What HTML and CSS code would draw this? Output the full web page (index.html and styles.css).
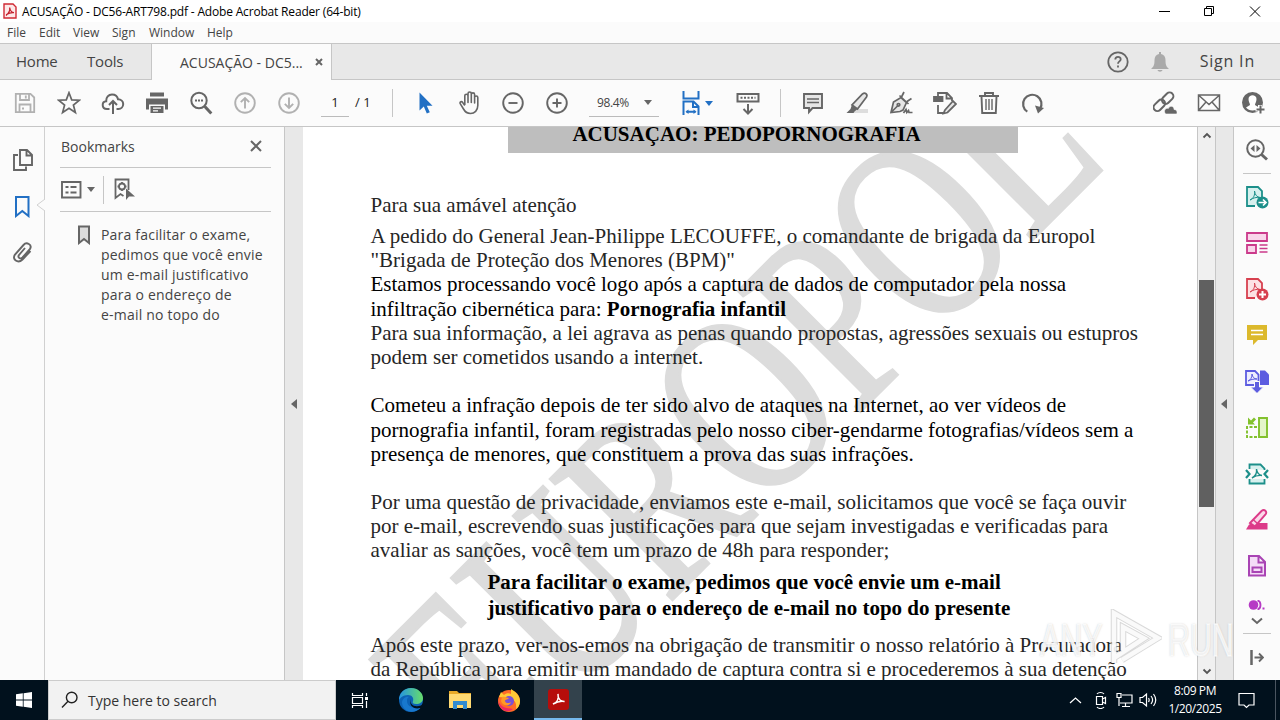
FILE: index.html
```html
<!DOCTYPE html>
<html lang="pt">

<head>
    <meta charset="UTF-8">
    <meta name="viewport" content="width=device-width, initial-scale=1.0">
    <title>ACUSAÇÃO - DC56-ART798.pdf - Adobe Acrobat Reader (64-bit)</title>
    <link rel="stylesheet" href="styles.css">
</head>

<body>
    <header class="titlebar">
        <svg class="app-icon" width="14" height="16" viewBox="0 0 14 16"><path d="M1 1h9l3 3v11H1z" fill="#fde9e9" stroke="#d02a35" stroke-width="1.4"/><path d="M3.500 12C6 10 7 7 6.700 4.500c.4 3 2.300 5 4.300 5.200-2.500-.3-5 .3-7.500 1.800z" fill="none" stroke="#c3202c" stroke-width="1.200"/></svg>
        <span class="title">ACUSAÇÃO - DC56-ART798.pdf - Adobe Acrobat Reader (64-bit)</span>
        <svg class="win-buttons" width="110" height="20" viewBox="0 0 110 20" fill="none" stroke="#000"><path d="M4 10.500h11M49.500 7.500h7v7h-7zM51.500 7.500v-2h7v7h-2M95 5.500l10 10M105 5.500l-10 10"/></svg>
    </header>

    <nav class="menubar">
        <span class="m-file">File</span><span class="m-edit">Edit</span><span class="m-view">View</span><span class="m-sign">Sign</span><span class="m-window">Window</span><span>Help</span>
    </nav>

    <div class="tabs">
        <div class="tab-home">Home</div>
        <div class="tab-tools">Tools</div>
        <div class="tab-active"><span>ACUSAÇÃO - DC5...</span><svg width="8" height="8" viewBox="0 0 8 8"><path d="M1 1l6 6M7 1L1 7" stroke="#666" stroke-width="2"/></svg></div>
        <div class="account">
            <svg width="22" height="22" viewBox="0 0 22 22" fill="none" stroke="#666" stroke-width="1.800"><circle cx="11" cy="11" r="9.700"/><path d="M8.300 8.600c0-3.700 5.500-3.500 5.400-.3 0 2-2.700 2.200-2.700 4.400M11 14.600v2"/></svg>
            <svg width="18" height="20" viewBox="0 0 18 20" fill="#aaa"><path d="M8 0h2v2c3 .6 4.500 3 4.500 6 0 5 .8 6.500 3 8.300v.7H.5v-.7c2.200-1.800 3-3.300 3-8.300 0-3 1.500-5.400 4.500-6zM6.500 18h5c-.5 2.300-4.500 2.300-5 0z"/></svg>
            <span>Sign In</span>
        </div>
    </div>

    <div class="toolbar">
        <div class="cell"><svg viewBox="0 0 24 24" fill="none" stroke="#b1b1b1" stroke-width="1.800"><path d="M2.800 2.900h14.700l3.700 3.600v14.700H2.800zM7 3v6h9V3M12.800 4.500v3M6.500 21v-7.500h11V21M9 17.500h2"/></svg></div>
        <div class="cell"><svg viewBox="0 0 24 24" fill="none" stroke="#666" stroke-width="1.700"><path d="M12 1.700l2.700 7.200 7.700.3-6 4.800 2 7.500L12 17.300l-6.400 4.200 2-7.500-6-4.800 7.700-.3z"/></svg></div>
        <div class="cell"><svg viewBox="0 0 24 24" fill="none" stroke="#666" stroke-width="2"><path d="M8.500 18H6c-2.500 0-4.300-1.600-4.300-4 0-2 1.400-3.700 3.500-3.800C5 6.500 7.500 3.500 11 3.500c3 0 5.500 2 6 4.800 3 0 5.200 2 5.200 4.800S20 18 17.500 18h-2M12 23V10.500M8 14l4-4 4 4"/></svg></div>
        <div class="cell"><svg viewBox="0 0 24 24" fill="#666"><path d="M5 1.500h14v4H5zM1 7.500h22v11h-3v-5H4v5H1zM5.500 15h13v7h-13z"/><path d="M8 17.200h8M8 19.800h5" stroke="#fff" stroke-width="1.200"/></svg></div>
        <div class="cell"><svg viewBox="0 0 24 24" fill="none" stroke="#666"><circle cx="10" cy="9.500" r="7.700" stroke-width="2"/><path d="M15.800 15.500l6.500 7" stroke-width="3"/><path d="M6 9.500h2M9 9.500h2M12 9.500h2" stroke-width="2"/></svg></div>
        <div class="cell"><svg viewBox="0 0 24 24" fill="none" stroke="#b1b1b1" stroke-width="1.900"><circle cx="12" cy="12" r="9.800"/><path d="M12 17.500v-10M7.800 11.200L12 7l4.200 4.200"/></svg></div>
        <div class="cell"><svg viewBox="0 0 24 24" fill="none" stroke="#b1b1b1" stroke-width="1.900"><circle cx="12" cy="12" r="9.800"/><path d="M12 6.500v10M7.800 12.800L12 17l4.200-4.200"/></svg></div>
        <div class="page-box"><span class="page-no">1</span><span>/ 1</span></div>
        <div class="tool-group">
            <div class="cell"><svg viewBox="0 0 24 24" fill="#2270c4"><path d="M6.500 1.500v18l4.300-4 3 7 3-1.300-3-6.500h5.700z"/></svg></div>
            <div class="cell"><svg viewBox="0 0 24 24" fill="none" stroke="#666" stroke-width="1.600" stroke-linejoin="round"><path d="M6.300 14.500V5.200c0-2 3.200-2 3.200 0V12 3.200c0-2.200 3.300-2.200 3.300 0V12 4c0-2.200 3.300-2.200 3.300 0v8.500V7c0-2 3.200-2 3.200 0V15c0 5-3.300 8-7.300 8-3.700 0-5.500-1.700-7-4.500L1.700 13.200c-.8-2.200 1.500-2.700 2.500-1.200l2.100 3"  transform="translate(1.500 -.5)"/></svg></div>
            <div class="cell"><svg viewBox="0 0 24 24" fill="none" stroke="#666" stroke-width="1.900"><circle cx="12" cy="12" r="9.800"/><path d="M7.500 12h9"/></svg></div>
            <div class="cell"><svg viewBox="0 0 24 24" fill="none" stroke="#666" stroke-width="1.900"><circle cx="12" cy="12" r="9.800"/><path d="M7.500 12h9M12 7.500v9"/></svg></div>
        </div>
        <div class="zoom-box"><span>98.4%</span><i class="caret"></i></div>
        <div class="fit"><svg viewBox="0 0 24 26" fill="none" stroke="#2270c4" stroke-width="2"><path d="M4.500 1v7.500h15V1M4.500 25V11.500h10l5 5V25M14 11.500v5.500h6M7.500 21.800h9" /><path d="M9.500 19.500l-3 2.300 3 2.300zM14.500 19.500l3 2.300-3 2.300z" stroke="none" fill="#2270c4"/></svg><i class="caret blue"></i></div>
        <div class="cell"><svg viewBox="0 0 24 24" fill="none" stroke="#666" stroke-width="2"><path d="M1.500 3h21v7.500h-21zM12 13v9M7.500 18l4.500 4.500 4.500-4.500"/><path d="M4.500 6.800h15" stroke-dasharray="2 1.500"/></svg></div>
        <div class="edit-group">
            <div class="cell"><svg viewBox="0 0 24 24" fill="#e6e6e6" stroke="#666" stroke-width="1.900"><path d="M3 3h18v14h-9.500L8 21v-4H3z"/><path d="M6 8h12M6 11.500h12" stroke-width="1.400"/></svg></div>
            <div class="cell"><svg viewBox="0 0 24 24"><path d="M9 18h14v4H6z" fill="#ddd"/><path d="M17.500 3c2.500-2 5.500.3 4 3L12.500 18l-5.500-4z" fill="#e6e6e6" stroke="#666" stroke-width="1.700"/><path d="M7 13.500l5.500 4.500-3 2.500-1 1.500H1.500l4-4z" fill="#666"/></svg></div>
            <div class="cell"><svg viewBox="0 0 24 24" fill="#e6e6e6" stroke="#666" stroke-width="1.700"><path d="M2 21.500L4.500 11l7.500-4.500 5.500 5L14 19l-3 1.500zM10.500 4.500l9 8.500M15 1l-2.500 5M22.500 7.500L18 10.500M2.500 21L9 14.500"/><circle cx="9.500" cy="13.800" r="1.300"/><path d="M14.500 22l2.500-3.500.8 3 1.700-2 .5 2h3.500" fill="none"/></svg></div>
            <div class="cell"><svg viewBox="0 0 24 24" fill="none" stroke="#666" stroke-width="1.800"><path d="M5 5V2h9l5 5v3M13.500 2v5.500H19M5 14v8h6"/><path d="M1 6h8.500v4H1z" fill="#666"/><path d="M12 19l8-9 3 3-8.500 8.500-4 1z" fill="#e6e6e6"/></svg></div>
            <div class="cell"><svg viewBox="0 0 24 24" fill="none" stroke="#666" stroke-width="1.900"><path d="M2 5h20M8 4.500V2h8v2.500M4.500 5.500l.7 16.500h13.600l.7-16.500"/><path d="M9 8v11M12 8v11M15 8v11" stroke-width="1.400"/></svg></div>
            <div class="cell"><svg viewBox="0 0 24 24" fill="none" stroke="#666" stroke-width="2.200"><path d="M6.300 20.700A9.200 9.200 0 1 1 19 18"/><path d="M14 14.500l9 2.500-6 5.500z" fill="#666" stroke="none"/></svg></div>
        </div>
        <div class="share-group">
            <div class="cell"><svg viewBox="0 0 24 24" fill="none" stroke="#666" stroke-width="2"><rect x="8" y="3.500" width="13" height="7.500" rx="3.700" transform="rotate(-45 14.500 7)"/><rect x="0" y="10.500" width="13" height="7.500" rx="3.700" transform="rotate(-45 6.500 14.500)"/><path d="M12.500 23c-2.800-4 1-6.500 2.800-5.500 1.500-3.800 6-2.200 5.700 1 3 0 3.600 3 2.600 4.500z" fill="#666" stroke="#fbfbfb" stroke-width=".6"/></svg></div>
            <div class="cell"><svg viewBox="0 0 24 24" fill="none" stroke="#666" stroke-width="1.500"><path d="M1.500 4h21v15.500h-21zM2 4.500l10 9 10-9M2 19l7-8M22 19l-7-8"/></svg></div>
            <div class="cell"><svg viewBox="0 0 24 24"><circle cx="11.500" cy="11.500" r="10.500" fill="#666"/><path d="M7.500 8c0-5 8-5 8 0 0 3-1.500 4-1.500 6l4 2.500c-3 4-10 4-13 0l4-2.500c0-2-1.500-3-1.500-6z" fill="#fff"/><path d="M19 14v9M14.500 18.500h9" stroke="#fff" stroke-width="4"/><path d="M19.500 14.500v8M15.500 18.500h8" stroke="#666" stroke-width="2"/></svg></div>
        </div>
    </div>

    <main class="workspace">
        <aside class="rail">
            <svg width="22" height="24" viewBox="0 0 22 24" fill="none" stroke="#666" stroke-width="1.900"><path d="M8 2h7l5 5v10H8zM14.500 2v5.500H20M6 7H2v15h12v-3.500"/></svg>
            <svg width="22" height="24" viewBox="0 0 22 24" fill="none" stroke="#2270c4" stroke-width="2"><path d="M4 3h12.500v19l-6.200-5L4 22z"/></svg>
            <svg width="22" height="24" viewBox="0 0 22 24" fill="none" stroke="#666" stroke-width="1.900"><path d="M18.500 11l-8 8.500c-4.500 4.500-11 0-7.500-5l8.500-9.500c3-3.500 9-.5 6.500 4l-7.500 8.500c-2.200 2-5.200 0-3.500-2.500l6-7"/></svg>
            <svg class="rail-notch" width="9" height="18" viewBox="0 0 9 18"><path d="M9 0v3L1 9l8 6v3" fill="#fbfbfb" stroke="#d0d0d0"/></svg>
        </aside>
        <section class="bookmarks">
            <div class="bm-head"><span>Bookmarks</span><svg width="12" height="12" viewBox="0 0 12 12"><path d="M1 1l10 10M11 1L1 11" stroke="#666" stroke-width="2"/></svg></div>
            <div class="bm-tools">
                <svg width="21" height="18" viewBox="0 0 21 18" fill="none" stroke="#666" stroke-width="1.900"><path d="M1 1h18.500v15.500H1zM4.500 6h3M4.500 11.500h3M9.500 6h6M9.500 11.500h6"/></svg>
                <i class="caret"></i>
                <span class="bm-sep"></span>
                <svg width="22" height="23" viewBox="0 0 22 23" fill="none" stroke="#666" stroke-width="1.800"><path d="M15.500 12V1.500h-13V20l5-4 3 2"/><circle cx="9" cy="8.500" r="3"/><path d="M9 4v2M9 11v2M4.500 8.500h2M11.500 8.500h2"/><path d="M13 10.500v11.500l3-3.500h6z" fill="#666" stroke="none"/></svg>
            </div>
            <div class="bm-item">
                <svg width="14" height="20" viewBox="0 0 14 20"><path d="M2 1.500h10V18l-5-4-5 4z" fill="#ddd" stroke="#666" stroke-width="2"/></svg>
                <p>Para facilitar o exame,<br>pedimos que você envie<br>um e-mail justificativo<br>para o endereço de<br>e-mail no topo do</p>
            </div>
        </section>
        <div class="splitter"><i></i></div>
        <article class="page">
            <svg class="page-mark" width="894" height="553" viewBox="303 127 894 553"><text transform="translate(487 785) rotate(-45) scale(.7307 1)">EUROPOL</text></svg>
            <h1><span>ACUSAÇÃO: PEDOPORNOGRAFIA</span></h1>
            <div class="letter">
                <p class="greeting">Para sua amável atenção</p>
                <p>A pedido do General Jean-Philippe LECOUFFE, o comandante de brigada da Europol<br>"Brigada de Proteção dos Menores (BPM)"</p>
                <p class="dark">Estamos processando você logo após a captura de dados de computador pela nossa<br>infiltração cibernética para: <b>Pornografia infantil</b></p>
                <p>Para sua informação, a lei agrava as penas quando propostas, agressões sexuais ou estupros<br>podem ser cometidos usando a internet.</p>
                <p class="dark gap">Cometeu a infração depois de ter sido alvo de ataques na Internet, ao ver vídeos de<br>pornografia infantil, foram registradas pelo nosso ciber-gendarme fotografias/vídeos sem a<br>presença de menores, que constituem a prova das suas infrações.</p>
                <p class="gap">Por uma questão de privacidade, enviamos este e-mail, solicitamos que você se faça ouvir<br>por e-mail, escrevendo suas justificações para que sejam investigadas e verificadas para<br>avaliar as sanções, você tem um prazo de 48h para responder;</p>
                <p class="notice">Para facilitar o exame, pedimos que você envie um e-mail<br>justificativo para o endereço de e-mail no topo do presente</p>
                <p>Após este prazo, ver-nos-emos na obrigação de transmitir o nosso relatório à Procuradora<br>da República para emitir um mandado de captura contra si e procederemos à sua detenção</p>
            </div>
        </article>
        <div class="scrollbar">
            <svg width="10" height="7" viewBox="0 0 10 7"><path d="M1.500 5.500L5 2l3.500 3.500" fill="none" stroke="#555" stroke-width="1.800"/></svg>
            <div class="thumb"></div>
            <svg width="10" height="7" viewBox="0 0 10 7"><path d="M1.500 1.500L5 5l3.500-3.500" fill="none" stroke="#555" stroke-width="1.800"/></svg>
        </div>
        <div class="splitter right"><i></i></div>
        <aside class="side-tools">
            <div class="st first"><svg viewBox="0 0 24 24" fill="none" stroke="#666"><circle cx="10.500" cy="10.500" r="8.300" stroke-width="2"/><path d="M16.500 16.500l5.500 5" stroke-width="3"/><path d="M9.500 7v7L5.500 10.500zM11.500 7v7l4-3.500z" fill="#666" stroke="none"/></svg></div>
            <div class="st"><svg viewBox="0 0 24 24"><path d="M10 21H2V2h11l4 4v6" fill="#d7f0ee" stroke="#1c8f8a" stroke-width="1.800"/><path d="M5 15c4-2 5-5 4.500-9 .5 4 2.500 6 5.500 6.500-4-.5-7 .5-10 2.500z" fill="none" stroke="#1c8f8a"/><circle cx="17.500" cy="17.500" r="6" fill="#1c8f8a"/><path d="M13.500 17.500h7M18 14.500l3 3-3 3" stroke="#fff" stroke-width="1.700" fill="none"/></svg></div>
            <div class="st"><svg viewBox="0 0 24 24" fill="#f9d5ea" stroke="#cb3a8b" stroke-width="1.800"><path d="M2 2h20v8H2zM2 14h9v8H2z"/><path d="M14.500 14h8M14.500 17.500h8M14.500 21h8" stroke-width="1.300"/></svg></div>
            <div class="st"><svg viewBox="0 0 24 24"><path d="M10 21H2V2h11l4 4v6" fill="#fce2e4" stroke="#d7404f" stroke-width="1.800"/><path d="M5 15c4-2 5-5 4.500-9 .5 4 2.500 6 5.500 6.500-4-.5-7 .5-10 2.500z" fill="none" stroke="#d7404f"/><circle cx="17.500" cy="17.500" r="6" fill="#d7404f"/><path d="M14 17.500h7M17.500 14v7" stroke="#fff" stroke-width="2"/></svg></div>
            <div class="st"><svg viewBox="0 0 24 24"><path d="M2 2h20v15h-9l-5 5v-5H2z" fill="#dcb92c"/><path d="M6 7.500h12M6 11.500h12" stroke="#fff" stroke-width="1.700"/></svg></div>
            <div class="st"><svg viewBox="0 0 24 24"><path d="M15 1.500h5l4 4V16h-9z" fill="#5c5ce0"/><path d="M1 2h9l3.500 3.500V16H1z" fill="#eeeefe" stroke="#5c5ce0" stroke-width="1.800"/><path d="M3 12c3-1 4-4 4-7 .5 3 2 5 5 5-4 0-6 .5-9 2z" fill="none" stroke="#5c5ce0"/><path d="M9.500 12.500h5V18h4L12 24.500 5.500 18h4z" fill="#5c5ce0" stroke="#fafafa"/></svg></div>
            <div class="st"><svg viewBox="0 0 24 24" fill="none" stroke="#82c12d" stroke-width="1.900"><path d="M14 2h8v19h-8z" fill="#e4f5ca"/><path d="M12 11H2v10h10" stroke-dasharray="3 1.500"/><path d="M3 1.500v7h7L8 6.500l3-3-2-2-3 3z" fill="#82c12d" stroke="none"/></svg></div>
            <div class="st"><svg viewBox="0 0 24 24" fill="none" stroke="#1c8f8a" stroke-width="1.800"><path d="M4.500 7V2.500h11l4 4V8M4.500 17v4.500h15V17" fill="#d7f0ee"/><path d="M1 8l3.500 4L1 16M23 8l-3.500 4 3.500 4" stroke-width="2.200"/><path d="M7 16c4-2 5-5 4.500-9 .5 4 2.500 6 5.500 6.500-4-.5-7 .5-10 2.500z" stroke-width="1.400"/></svg></div>
            <div class="st"><svg viewBox="0 0 24 24"><path d="M9 15h13.500v6.500H1l3-5z" fill="#dc3b89"/><path d="M5 15L16.500 3c3-2.500 6 .8 4 3.500L10 18.500z" fill="#fbd8e9" stroke="#dc3b89" stroke-width="1.900"/><path d="M8 11.500l4.500 4" stroke="#dc3b89" stroke-width="1.500"/></svg></div>
            <div class="st"><svg viewBox="0 0 24 24" fill="#f4dbf7" stroke="#a944b4" stroke-width="2"><path d="M4 2h10l6 6v13.500H4zM13.500 2v6.500H20"/><rect x="7.500" y="13.500" width="9" height="4.500"/></svg></div>
            <div class="more"><svg width="18" height="10" viewBox="0 0 18 10"><circle cx="5.500" cy="5" r="4.800" fill="#b63ac5"/><path d="M9.500.5c4 1 4 8 0 9M14.500 8.500h2" fill="none" stroke="#b63ac5" stroke-width="1.800"/></svg></div>
            <svg class="chev" width="12" height="8" viewBox="0 0 12 8"><path d="M1 1.500l5 4.500 5-4.500" fill="none" stroke="#666" stroke-width="2"/></svg>
            <svg class="expand" width="14" height="16" viewBox="0 0 14 16"><path d="M1.500 0v15" stroke="#666" stroke-width="2.500"/><path d="M4.500 7.500h8M9 3.500l4 4-4 4" fill="none" stroke="#666" stroke-width="1.900"/></svg>
        </aside>
    </main>

    <footer class="taskbar">
        <div class="start"><svg width="16" height="16" viewBox="0 0 16 16" fill="#fff"><path d="M0 2.300l6.800-1v6.300H0zM7.600 1.200L16 0v7.600H7.600zM0 8.400h6.800v6.300l-6.800-1zM7.600 8.400H16V16l-8.400-1.200z"/></svg></div>
        <div class="search"><svg width="18" height="18" viewBox="0 0 18 18" fill="none" stroke="#222" stroke-width="1.400"><circle cx="10.700" cy="6.500" r="5.300"/><path d="M7 10.200L1 16.500"/></svg><span>Type here to search</span></div>
        <div class="app task-view"><svg width="18" height="17" viewBox="0 0 18 17" fill="none" stroke="#fff" stroke-width="1.200"><path d="M1.500 1v2.500h10V1M1.500 5.500h10v6h-10zM1.500 16v-2.500h10V16M15.500 1v3M15.500 9v7"/><path d="M14 5h3v3h-3z" fill="#fff" stroke="none"/></svg></div>
        <div class="app"><svg width="24" height="24" viewBox="0 0 24 24"><defs><linearGradient id="edge" x1="0" x2="1"><stop offset="0" stop-color="#2494e2"/><stop offset="1" stop-color="#67dd6b"/></linearGradient></defs><circle cx="12" cy="12" r="12" fill="#0c62b5"/><path d="M0 12C0 5 5 0 12 0s12 5 12 10c0 4-3 6-7 6-3 0-4-1-3-3 1-3-1-6-5-6-5 0-8 3-9 5z" fill="url(#edge)"/><path d="M8 13c0 5 5 8 12 6l2 .5C15 27 4 24 3 15c0-4 4-7 7-6-2 1-2 2-2 4z" fill="#1878ce"/><path d="M12 11c-2 5 3 9 10 6.500l1-1 1-1V21l-3-1c-6 2-12-3-9-9z" fill="#01111d"/></svg></div>
        <div class="app"><svg width="22" height="20" viewBox="0 0 22 20"><path d="M0 1h8l2 2h12v14H0z" fill="#e8aa28"/><path d="M0 4h22v14H0z" fill="#ffda72"/><path d="M4 19v-8h14v8h-4v-4H8v4z" fill="#318bd0"/></svg></div>
        <div class="app"><svg width="24" height="24" viewBox="0 0 24 24"><circle cx="12" cy="13" r="11" fill="#ff6a27"/><path d="M2 9l2-5 3 3c2-2 5-2 7-1V1c5 3 9 7 9 12 0 4-2 7-4 8 1-8-3-10-7-11z" fill="#ffc936"/><path d="M1 12c3 9 10 8 15 9-6 5-14 1-15-9z" fill="#ee2a62"/><circle cx="12" cy="13" r="5" fill="#7951d6"/><path d="M5 9c3-1 5 1 7 1-1 2-4 1-4 3s4 3 6 1c-1 5-9 4-10-1z" fill="#ff9a24"/></svg></div>
        <div class="app current"><svg width="21" height="21" viewBox="0 0 21 21"><rect width="21" height="21" rx="3" fill="#b60d0b"/><path d="M5 15c4-1.500 6-5.500 5-10-.5 5 3 7.800 6.500 7.500-4-.8-8 .5-11.500 2.500z" fill="none" stroke="#fff" stroke-width="1.500"/></svg></div>
        <div class="tray">
            <svg width="90" height="18" viewBox="0 0 90 18" fill="none" stroke="#fff" stroke-width="1.200"><path d="M2 12l5.500-5 5.500 5M28.500 5.500h6v8h-6zM34.500 8l3-1.500v6l-3-1.500M29 3c1.500-2 5.500-2 7 0M29 16c1.500 2 5.500 2 7 0"/><path d="M54 4h10v8H52M49 2.500h4v4h-4zM51 6.500V15M57.500 12v3M54 15.500h8"/><path d="M72 6.500h2.500l4-3.500v12l-4-3.500H72zM80.500 7c1 1.500 1 2.500 0 4M83 5c2 2.500 2 5.500 0 8M85.500 3c3 4 3 8 0 12"/></svg>
            <div class="clock">8:09 PM<br>1/20/2025</div>
            <svg width="17" height="17" viewBox="0 0 17 17" fill="none" stroke="#fff" stroke-width="1.200"><path d="M1 1.500h15v11.500h-5l-2.500 2.500L6 13H1z"/></svg>
        </div>
    </footer>

    <div class="brand">
        <span>ANY</span>
        <svg width="56" height="58" viewBox="0 0 56 58" fill="none"><path d="M8 54V4l44 25-36 22M17 41V18l21 11.500L8 49" stroke="#aaa" stroke-opacity=".45" stroke-width="6.500"/><path d="M8 54V4l44 25-36 22M17 41V18l21 11.500L8 49" stroke="#fff" stroke-opacity=".85" stroke-width="4.500"/></svg>
        <span>RUN</span>
    </div>
</body>

</html>
```
FILE: styles.css
```css
* {
    box-sizing: border-box;
}

body {
    margin: 0;
    width: 1280px;
    height: 720px;
    overflow: hidden;
    position: relative;
    background-color: #fbfbfb;
    color: #444;
    font-family: "Open Sans", sans-serif;
    font-size: 12px;
}

svg {
    display: block;
    flex: none;
}

p {
    margin: 0;
}

.titlebar {
    display: flex;
    align-items: center;
    height: 22px;
    padding-left: 3px;
    background-color: #fff;
    color: #000;
}

.title {
    margin-left: 5px;
    letter-spacing: -0.18px;
}

.win-buttons {
    margin-left: auto;
    margin-right: 15px;
}

.menubar {
    display: flex;
    align-items: center;
    height: 21px;
    padding-left: 7px;
    padding-bottom: 1px;
}

.m-file {
    width: 32px;
}

.m-edit {
    width: 34px;
}

.m-view {
    width: 39px;
}

.m-sign {
    width: 37px;
}

.m-window {
    width: 58px;
}

.tabs {
    display: flex;
    height: 37px;
    border-top: 1px solid #c6c6c6;
    border-bottom: 1px solid #c6c6c6;
    background-color: #e8e8e8;
    font-size: 15px;
    line-height: 35px;
}

.tab-home {
    width: 87px;
    padding-left: 16px;
    letter-spacing: -0.2px;
}

.tab-tools {
    width: 64px;
    letter-spacing: -0.2px;
}

.tab-active {
    display: flex;
    align-items: center;
    width: 181px;
    height: 36px;
    padding-left: 28px;
    border: solid #c6c6c6;
    border-width: 0 1px;
    background-color: #fbfbfb;
    font-size: 14px;
}

.tab-active span {
    width: 135px;
    white-space: nowrap;
}

.account {
    display: flex;
    align-items: center;
    margin-left: auto;
    padding-right: 25px;
}

.account span {
    margin-left: 31px;
    font-size: 16px;
    letter-spacing: 0.8px;
}

.account svg + svg {
    margin-left: 22px;
}

.toolbar {
    display: flex;
    align-items: center;
    height: 47px;
    padding: 0 5px 0 3px;
    border-bottom: 1px solid #c6c6c6;
}

.cell {
    display: flex;
    justify-content: center;
    flex: none;
    width: 44px;
}

.cell svg {
    width: 24px;
    height: 24px;
}

.page-box {
    display: flex;
    width: 82px;
    height: 28px;
    padding-left: 10px;
    border-right: 1px solid #c6c6c6;
    font-size: 13px;
    line-height: 27px;
    color: #222;
}

.page-no {
    width: 28px;
    margin-right: 6px;
    border-bottom: 1px solid #bbb;
    text-align: center;
}

.tool-group {
    display: flex;
    padding-left: 10px;
}

.zoom-box {
    display: flex;
    align-items: center;
    width: 70px;
    height: 28px;
    margin: 0 10px;
    padding-left: 8px;
    border-bottom: 1px solid #bbb;
}

.zoom-box span {
    width: 47px;
    letter-spacing: -0.4px;
}

.caret {
    border: 4px solid transparent;
    border-top: 5px solid #666;
    border-bottom: 0;
}

.caret.blue {
    border-top-color: #2270c4;
    margin-left: 2px;
}

.fit {
    display: flex;
    align-items: center;
    width: 57px;
    padding-left: 10px;
}

.fit svg {
    width: 24px;
    height: 26px;
}

.edit-group {
    display: flex;
    margin-left: 10px;
    padding: 2px 0 2px 10px;
    border-left: 1px solid #c6c6c6;
}

.share-group {
    display: flex;
    margin-left: auto;
}

.workspace {
    display: flex;
    height: 553px;
}

.rail {
    position: relative;
    display: flex;
    flex-direction: column;
    gap: 22px;
    width: 45px;
    padding: 21px 0 0 12px;
    border-right: 1px solid #d0d0d0;
}

.rail-notch {
    position: absolute;
    right: -1px;
    top: 69px;
}

.bookmarks {
    width: 239px;
    padding: 0 13px 0 15px;
}

.bm-head,
.bm-tools {
    display: flex;
    align-items: center;
    border-bottom: 1px solid #c6c6c6;
}

.bm-head {
    justify-content: space-between;
    height: 41px;
    padding: 0 9px 2px 1px;
    font-size: 14px;
}

.bm-tools {
    height: 44px;
    padding-left: 1px;
}

.bm-tools .caret {
    margin-left: 5px;
}

.bm-sep {
    width: 1px;
    height: 28px;
    margin: 0 9px 0 8px;
    background-color: #c6c6c6;
}

.bm-item {
    display: flex;
    gap: 10px;
    padding: 13px 0 0 17px;
    font-size: 14px;
    line-height: 20px;
    letter-spacing: 0.2px;
    white-space: nowrap;
}

.splitter {
    display: flex;
    align-items: center;
    width: 19px;
    padding-left: 6px;
    border-left: 1px solid #c6c6c6;
    background-color: #e8e8e8;
}

.splitter i {
    border: 5px solid transparent;
    border-right: 6px solid #666;
    border-left: 0;
}

.splitter.right {
    border-right: 1px solid #c6c6c6;
    padding-left: 5px;
}

.page {
    position: relative;
    width: 894px;
    overflow: hidden;
    background-color: #fff;
    color: #262626;
    font-family: "Liberation Serif", serif;
    font-size: 21.03px;
    line-height: 24.18px;
}

/* diagonal mark behind the letter */
.page-mark {
    position: absolute;
    left: 0;
    top: 0;
}

.page-mark text {
    font-size: 262px;
    fill: #dcdcdc;
    stroke: #dcdcdc;
    stroke-width: 3px;
}

.page h1 {
    position: relative;
    width: 510px;
    height: 26px;
    margin: 0 0 0 205px;
    padding-right: 33px;
    overflow: hidden;
    background-color: #bebebe;
    color: #000;
    font-size: 21px;
    line-height: 24px;
    text-align: center;
}

.page h1 span {
    display: block;
    margin-top: -5px;
}

.letter {
    position: relative;
    padding: 40.1px 0 0 67.5px;
    white-space: nowrap;
}

.greeting {
    margin-bottom: 6.8px;
}

.dark {
    color: #000;
}

.gap {
    margin-top: 24.18px;
}

.notice {
    margin: 6.5px 0 12px 117px;
    color: #000;
    font-weight: bold;
    line-height: 26px;
}

.scrollbar {
    display: flex;
    flex-direction: column;
    align-items: center;
    width: 18px;
    padding: 5px 0;
    border-left: 1px solid #c6c6c6;
    background-color: #f0f0f0;
}

.thumb {
    width: 15px;
    height: 227px;
    margin: 141px 0 auto;
    background-color: #606060;
}

.side-tools {
    display: flex;
    flex-direction: column;
    align-items: center;
    width: 46px;
}

.st {
    display: flex;
    align-items: center;
    height: 46.1px;
}

.st svg {
    width: 24px;
    height: 24px;
}

.st.first {
    height: 47px;
    border-bottom: 1px solid #c6c6c6;
    padding: 0 2px;
}

.more {
    height: 13px;
    margin-top: 11px;
}

.chev {
    margin-top: 4px;
}

.expand {
    box-sizing: content-box;
    margin-top: 8px;
    padding: 16px 7px 0;
    border-top: 1px solid #c6c6c6;
}

.taskbar {
    display: flex;
    height: 40px;
    background-color: #01111d;
    color: #fff;
}

.start {
    display: flex;
    align-items: center;
    justify-content: center;
    width: 48px;
}

.search {
    display: flex;
    align-items: center;
    gap: 9px;
    width: 288px;
    padding-left: 12px;
    border: 1px solid #ccc;
    background-color: #f2f2f2;
    color: #333;
    font-size: 14px;
}

.app {
    display: flex;
    align-items: center;
    justify-content: center;
    width: 48px;
    margin-right: 1px;
}

.task-view {
    margin-right: 3px;
}

.current {
    background-color: #33424c;
    border-bottom: 2px solid #76b9ed;
}

.tray {
    display: flex;
    align-items: center;
    margin-left: auto;
    margin-right: 4px;
    padding-right: 20px;
    border-right: 1px solid #4a5560;
}

.tray > svg:first-child {
    margin-left: 2px;
}

.clock {
    width: 72px;
    margin: 0 7px 0 1px;
    line-height: 18px;
    text-align: center;
    letter-spacing: -0.4px;
}

/* translucent logo in the lower right corner */
.brand {
    position: absolute;
    left: 1040px;
    top: 608px;
    display: flex;
    align-items: center;
    color: rgba(255, 255, 255, 0.85);
    font-family: "Liberation Sans", sans-serif;
    font-size: 46px;
    text-shadow: 0 0 2px rgba(120, 120, 120, 0.65);
    -webkit-text-stroke: 1.5px rgba(255, 255, 255, 0.7);
}

.brand span {
    width: 66px;
    padding-top: 5px;
    transform: scaleX(0.66);
    transform-origin: left;
}

.brand svg {
    margin: 0 6px 0 0;
}
```
